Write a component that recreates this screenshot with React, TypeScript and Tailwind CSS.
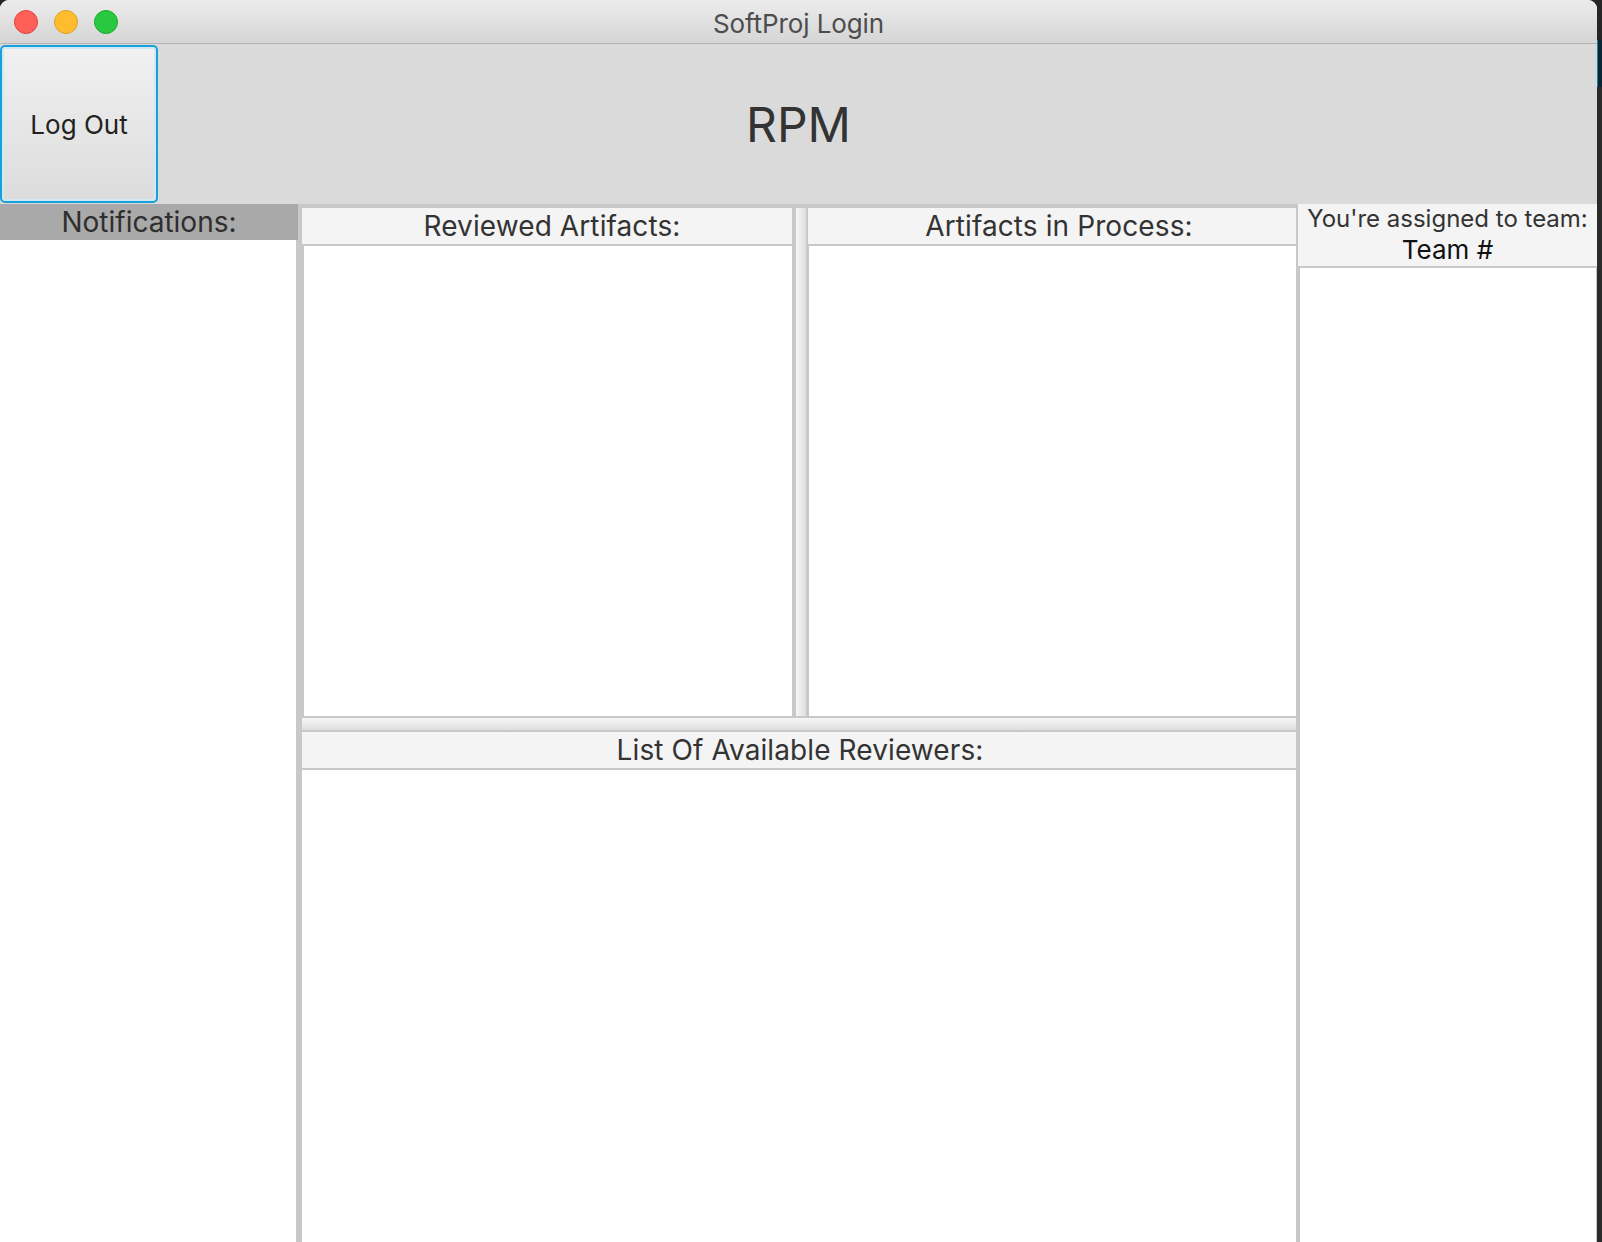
import React from "react";

function PanelHeader({ children, className = "" }: { children: React.ReactNode; className?: string }) {
  return (
    <div
      className={`h-[38px] shrink-0 bg-[#f4f4f4] border-b-2 border-[#c8c8c8] flex items-center justify-center text-[28px] tracking-[0.1px] text-[#333333] leading-none ${className}`}
    >
      {children}
    </div>
  );
}

export default function App() {
  return (
    <div className="w-[1602px] h-[1242px] flex bg-[#262626] overflow-hidden font-['Inter',sans-serif]">
      <div className="w-[1597px] h-full flex flex-col rounded-t-[9px] overflow-hidden bg-white">
        {/* Title bar */}
        <div className="relative h-[44px] shrink-0 bg-gradient-to-b from-[#ececec] to-[#d5d5d5] border-b border-[#b4b4b4] flex items-center">
          <div className="flex items-center gap-[16px] pl-[14px] pt-[1px]">
            <span className="w-[24px] h-[24px] rounded-full bg-[#fe5f57] border border-[#e0443e]" />
            <span className="w-[24px] h-[24px] rounded-full bg-[#febc2e] border border-[#dea123]" />
            <span className="w-[24px] h-[24px] rounded-full bg-[#28c840] border border-[#1aab29]" />
          </div>
          <div className="absolute inset-0 flex items-center justify-center pt-[3px] text-[26px] text-[#4d4d4d] tracking-[-0.1px] pointer-events-none">
            SoftProj Login
          </div>
        </div>

        {/* Header */}
        <div className="h-[160px] shrink-0 bg-[#dadada] grid grid-cols-[158px_1fr_158px] items-center py-[1px]">
          <button className="h-[158px] w-[158px] rounded-[5px] border-2 border-[#18a0da] bg-gradient-to-b from-[#f1f1f1] to-[#dcdcdc] shadow-[inset_0_0_0_2px_#cfe9f5] text-[26px] text-[#222222] flex items-center justify-center">
            Log Out
          </button>
          <div className="flex items-center justify-center text-[48px] text-[#333333] leading-none pt-[2px]">
            RPM
          </div>
          <div />
        </div>

        {/* Main */}
        <div className="flex-1 flex min-h-0">
          {/* Notifications */}
          <div className="w-[298px] shrink-0 flex flex-col">
            <div className="h-[36px] shrink-0 bg-[#a9a9a9] flex items-center justify-center text-[28px] text-[#2e2e2e] leading-none">
              Notifications:
            </div>
            <div className="flex-1 bg-white border-r-2 border-[#c8c8c8]" />
          </div>

          {/* Center */}
          <div className="w-[1000px] shrink-0 bg-[#c8c8c8] pl-[4px] pr-[2px] pt-[4px] flex flex-col">
            <div className="h-[508px] shrink-0 flex">
              <div className="w-[490px] shrink-0 flex flex-col">
                <PanelHeader className="pl-[10px]">Reviewed Artifacts:</PanelHeader>
                <div className="flex-1 bg-white ml-[2px]" />
              </div>
              <div className="w-[16px] shrink-0 flex">
                <div className="w-[4px] bg-[#c8c8c8]" />
                <div className="flex-1 bg-gradient-to-r from-[#f6f6f6] to-[#dedede]" />
                <div className="w-[2px] bg-[#c8c8c8]" />
              </div>
              <div className="flex-1 flex flex-col">
                <PanelHeader className="pl-[14px]">Artifacts in Process:</PanelHeader>
                <div className="flex-1 bg-white ml-[1px]" />
              </div>
            </div>
            <div className="h-[16px] shrink-0 border-y-2 border-[#c8c8c8] bg-gradient-to-b from-[#f6f6f6] to-[#dedede]" />
            <div className="flex-1 flex flex-col">
              <PanelHeader className="pl-[2px]">List Of Available Reviewers:</PanelHeader>
              <div className="flex-1 bg-white" />
            </div>
          </div>

          {/* Team */}
          <div className="flex-1 flex flex-col">
            <div className="h-[64px] shrink-0 bg-[#f4f4f4] border-b-2 border-[#c8c8c8] flex flex-col items-center justify-center leading-none">
              <div className="text-[24px] text-[#333333]">You're assigned to team:</div>
              <div className="text-[26px] text-[#111111] mt-[6px]">Team #</div>
            </div>
            <div className="flex-1 bg-white border-l-2 border-r border-[#c8c8c8]" />
          </div>
        </div>
      </div>

      {/* desktop strip */}
      <div className="flex-1 flex flex-col">
        <div className="h-[40px]" />
        <div className="h-[47px] bg-[#0a2535] border-l border-[#1d7fa8]" />
        <div className="flex-1 bg-[#2a2a2a]" />
      </div>
    </div>
  );
}
